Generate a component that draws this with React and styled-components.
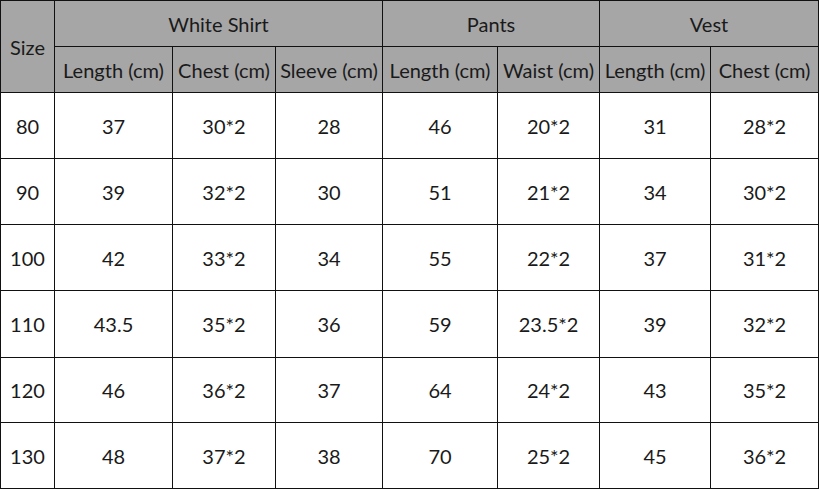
import React from 'react';
import styled, { createGlobalStyle } from 'styled-components';

const GlobalStyle = createGlobalStyle`
    body {
        margin: 0;
        background: #fff;
        font-family: Lato, "Open Sans", sans-serif;
    }
`;

const Table = styled.table`
    border-collapse: collapse;
    table-layout: fixed;
    width: 818px;
    color: #1a1a1a;
`;

const HeadCell = styled.th`
    background: #a6a6a6;
    border: 1px solid #111;
    font-weight: normal;
    font-size: 20px;
    height: ${props => props.h}px;
    padding: 0;
    text-align: center;
    white-space: nowrap;
`;

const Cell = styled.td`
    border: 1px solid #111;
    font-size: 20px;
    height: ${props => props.h}px;
    padding: 0;
    text-align: center;
`;

const widths = [54, 118, 103, 107, 115, 102, 111, 108];

const rows = [
    ['80', '37', '30*2', '28', '46', '20*2', '31', '28*2'],
    ['90', '39', '32*2', '30', '51', '21*2', '34', '30*2'],
    ['100', '42', '33*2', '34', '55', '22*2', '37', '31*2'],
    ['110', '43.5', '35*2', '36', '59', '23.5*2', '39', '32*2'],
    ['120', '46', '36*2', '37', '64', '24*2', '43', '35*2'],
    ['130', '48', '37*2', '38', '70', '25*2', '45', '36*2'],
];

const rowHeights = [65, 65, 65, 66, 64, 65];

export default function App() {
    return (
        <>
            <GlobalStyle />
            <Table>
                <colgroup>
                    {widths.map((w, i) => <col key={i} style={{ width: w }} />)}
                </colgroup>
                <thead>
                    <tr>
                        <HeadCell rowSpan={2} h={45}>Size</HeadCell>
                        <HeadCell colSpan={3} h={45}>White Shirt</HeadCell>
                        <HeadCell colSpan={2} h={45}>Pants</HeadCell>
                        <HeadCell colSpan={2} h={45}>Vest</HeadCell>
                    </tr>
                    <tr>
                        <HeadCell h={45}>Length (cm)</HeadCell>
                        <HeadCell h={45}>Chest (cm)</HeadCell>
                        <HeadCell h={45}>Sleeve (cm)</HeadCell>
                        <HeadCell h={45}>Length (cm)</HeadCell>
                        <HeadCell h={45}>Waist (cm)</HeadCell>
                        <HeadCell h={45}>Length (cm)</HeadCell>
                        <HeadCell h={45}>Chest (cm)</HeadCell>
                    </tr>
                </thead>
                <tbody>
                    {rows.map((r, i) => (
                        <tr key={r[0]}>
                            {r.map((v, j) => <Cell key={j} h={rowHeights[i]}>{v}</Cell>)}
                        </tr>
                    ))}
                </tbody>
            </Table>
        </>
    );
}
